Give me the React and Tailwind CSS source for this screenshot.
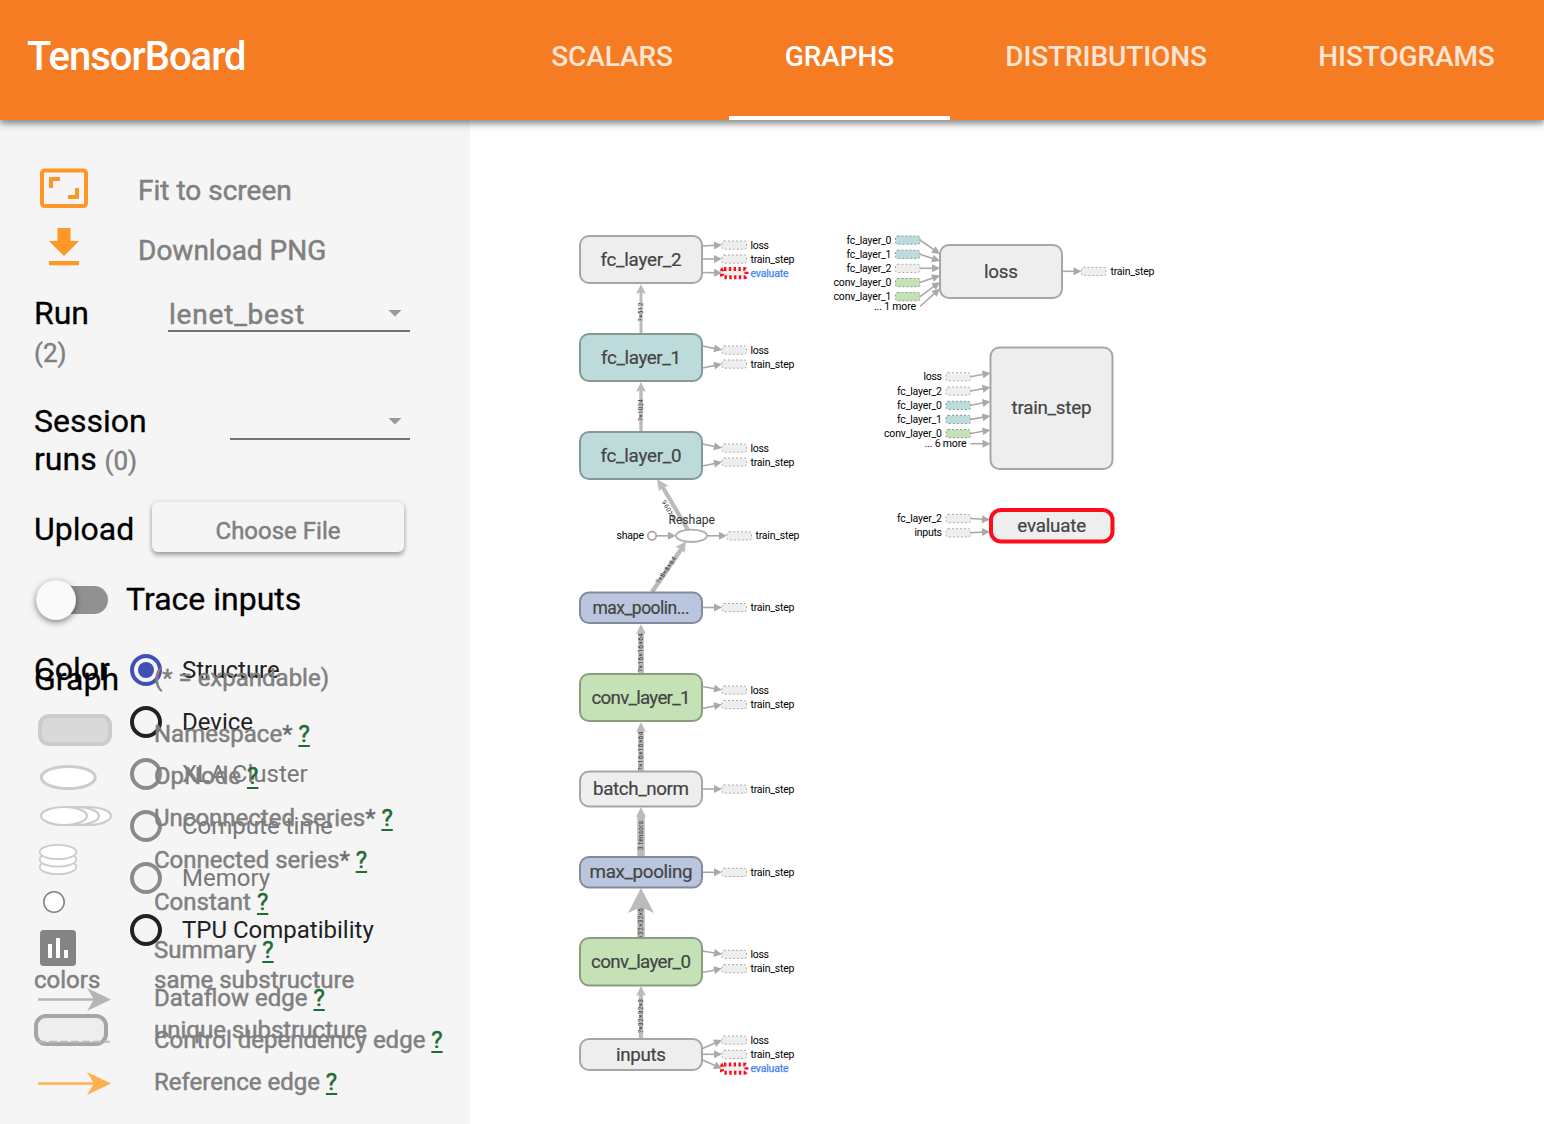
import React from "react";

const TABS = [
  { label: "SCALARS", tab: "w-[234px]", text: "tracking-[-0.1px] text-white/80" },
  { label: "GRAPHS", tab: "w-[221px]", text: "tracking-[-0.1px] text-white", active: true },
  { label: "DISTRIBUTIONS", tab: "w-[312px]", text: "tracking-[-0.1px] text-white/80" },
  { label: "HISTOGRAMS", tab: "w-[289px]", text: "tracking-[-0.1px] text-white/80" },
];

function Header() {
  return (
    <header className="relative z-10 flex h-[120px] shrink-0 bg-[#f57c22] shadow-[0_4px_4px_rgba(0,0,0,0.18),0_2px_10px_rgba(0,0,0,0.4)]">
      <div className="flex w-[495px] shrink-0 items-center pb-[6px] pl-[27px] text-[40px] font-medium tracking-[-1px] text-white">
        TensorBoard
      </div>
      <nav className="flex">
        {TABS.map((t) => (
          <div key={t.label} className={`flex shrink-0 flex-col ${t.tab}`}>
            <div className={`flex flex-1 items-center justify-center pb-[2px] text-[28px] font-medium ${t.text}`}>{t.label}</div>
            <div className={t.active ? "h-1 bg-white" : "h-1"} />
          </div>
        ))}
      </nav>
    </header>
  );
}

function Arrow() {
  return (
    <svg width="14" height="7" viewBox="0 0 14 7" className="shrink-0">
      <path d="M0.5 0H13.5L7 6.5Z" fill="#999" />
    </svg>
  );
}

function Controls() {
  return (
    <div className="flex flex-col">
      <div className="flex h-[60px] items-center">
        <svg className="ml-1 h-[52px] w-[52px] shrink-0" viewBox="38 164 52 52">
          <rect x="42" y="170.500" width="44" height="35.500" rx="2.500" fill="none" stroke="#ff9727" strokeWidth="4" />
          <path d="M51 188V179H60M77 188V197H68" fill="none" stroke="#ff9727" strokeWidth="4" />
        </svg>
        <span className="ml-12 pt-[2px] text-[28px] text-[#808080] [-webkit-text-stroke:0.5px_#808080]">Fit to screen</span>
      </div>
      <div className="flex h-[60px] items-center">
        <svg className="ml-1 h-[52px] w-[52px] shrink-0" viewBox="38 224 52 52">
          <path d="M57.500 228H70.500V241H79L64 256L49 241H57.500ZM49 261H79V265.200H49Z" fill="#ff9727" />
        </svg>
        <span className="ml-12 pt-[2px] text-[28px] text-[#808080] [-webkit-text-stroke:0.5px_#808080]">Download PNG</span>
      </div>

      <div className="mt-3 flex h-[100px] items-start">
        <div className="w-[134px] text-[32px] leading-[40px] text-black [-webkit-text-stroke:0.3px_#000]">
          <div className="pt-[1px]">Run</div>
          <div className="pt-[1px] text-[26px] leading-[38px] text-[#808080] [-webkit-text-stroke:0.4px_#808080]">(2)</div>
        </div>
        <div className="flex h-10 w-[242px] items-center justify-between border-b-2 border-[#737373] pr-2 pt-1 text-[28px] tracking-[0.8px] text-[#808080] [-webkit-text-stroke:0.5px_#808080]">
          <span className="pl-[1px] pt-[3px]">lenet_best</span>
          <Arrow />
        </div>
      </div>

      <div className="mt-2 flex h-[92px] items-start">
        <div className="w-[196px] text-[32px] leading-[38px] text-black [-webkit-text-stroke:0.3px_#000]">
          <div className="pt-[2px]">Session</div>
          <div>
            runs <span className="text-[26px] text-[#808080] [-webkit-text-stroke:0.4px_#808080]">(0)</span>
          </div>
        </div>
        <div className="flex h-10 w-[180px] items-center justify-end border-b-2 border-[#737373] pr-2 pt-1">
          <Arrow />
        </div>
      </div>

      <div className="mt-[10px] flex h-[50px] items-center">
        <div className="w-[118px] pt-[3px] text-[32px] text-black [-webkit-text-stroke:0.3px_#000]">Upload</div>
        <div className="flex h-[50px] w-[252px] items-center justify-center rounded-md bg-[#f5f5f5] pt-2 text-[24px] text-[#808080] shadow-[0_4px_4px_rgba(0,0,0,0.2),0_1px_5px_rgba(0,0,0,0.25)] [-webkit-text-stroke:0.5px_#808080]">
          Choose File
        </div>
      </div>

      <div className="mt-6 flex h-12 items-center">
        <div className="ml-[2px] flex h-7 w-[72px] items-center rounded-full bg-[#919191]">
          <div className="h-10 w-10 shrink-0 rounded-full bg-[#fafafa] shadow-[0_2px_6px_rgba(0,0,0,0.5)]" />
        </div>
        <div className="ml-[18px] pb-[3px] text-[32px] text-black [-webkit-text-stroke:0.3px_#000]">Trace inputs</div>
      </div>
    </div>
  );
}

const RADIOS = [
  { label: "Structure", ring: "border-[#3f51b5]", text: "text-[#212121]", on: true },
  { label: "Device", ring: "border-[#212121]", text: "text-[#212121]" },
  { label: "XLA Cluster", ring: "border-[#8b8b8b]", text: "text-[#777]" },
  { label: "Compute time", ring: "border-[#8b8b8b]", text: "text-[#777]" },
  { label: "Memory", ring: "border-[#8b8b8b]", text: "text-[#777]" },
  { label: "TPU Compatibility", ring: "border-[#212121]", text: "text-[#212121]" },
];

function ColorOptions() {
  return (
    <div className="col-start-1 row-start-1 flex flex-col">
      <div className="flex">
        <div className="h-[52px] w-24 text-[32px] leading-[50px] text-black [-webkit-text-stroke:0.3px_#000]">Color</div>
        <div className="flex flex-col">
          {RADIOS.map((r) => (
            <div key={r.label} className="flex h-[52px] items-center">
              <div className={`flex h-8 w-8 shrink-0 items-center justify-center rounded-full border-4 ${r.ring}`}>
                {r.on && <div className="h-4 w-4 rounded-full bg-[#3f51b5]" />}
              </div>
              <span className={`ml-5 whitespace-nowrap text-[24px] ${r.text}`}>{r.label}</span>
            </div>
          ))}
        </div>
      </div>
      <div className="flex h-12 items-center text-[24px] text-[#808080] [-webkit-text-stroke:0.5px_#808080]">
        <span className="w-[120px]">colors</span>
        <span>same substructure</span>
      </div>
      <div className="flex h-[52px] items-center text-[24px] text-[#808080] [-webkit-text-stroke:0.5px_#808080]">
        <div className="mr-[46px] h-8 w-[74px] rounded-xl border-4 border-[#a6a6a6] bg-[#eee]" />
        <span>unique substructure</span>
      </div>
    </div>
  );
}

function EdgeIcon({ color }) {
  return (
    <svg width="80" height="26" viewBox="34 0 80 26">
      <path d="M38 13.500H94" stroke={color} strokeWidth="2.500" />
      <path d="M87 2L111 13.500L87 25L94 13.500Z" fill={color} />
    </svg>
  );
}

const LEGEND = [
  {
    label: "Namespace", star: true, row: "h-[42px]",
    icon: (
      <svg width="80" height="42" viewBox="34 713 80 42">
        <rect x="40" y="716" width="70" height="28" rx="9" fill="#d9d9d9" stroke="#ccc" strokeWidth="4" />
      </svg>
    ),
  },
  {
    label: "OpNode", row: "h-[42px]",
    icon: (
      <svg width="80" height="42" viewBox="34 755 80 42">
        <ellipse cx="68.300" cy="777.500" rx="27" ry="11" fill="#fff" stroke="#ccc" strokeWidth="3" />
      </svg>
    ),
  },
  {
    label: "Unconnected series", star: true, row: "h-[42px]",
    icon: (
      <svg width="80" height="42" viewBox="34 797 80 42">
        {[88, 76, 64].map((x) => (
          <ellipse key={x} cx={x} cy="816" rx="23" ry="9" fill="#fff" stroke="#ccc" strokeWidth="2.200" />
        ))}
      </svg>
    ),
  },
  {
    label: "Connected series", star: true, row: "h-[42px]",
    icon: (
      <svg width="80" height="42" viewBox="34 839 80 42">
        {[867, 859.5, 852].map((y) => (
          <ellipse key={y} cx="58" cy={y} rx="18.300" ry="7.200" fill="#fff" stroke="#ccc" strokeWidth="1.800" />
        ))}
      </svg>
    ),
  },
  {
    label: "Constant", row: "h-[42px]",
    icon: (
      <svg width="80" height="42" viewBox="34 881 80 42">
        <circle cx="54" cy="902" r="10.200" fill="#fff" stroke="#848484" strokeWidth="1.600" />
      </svg>
    ),
  },
  {
    label: "Summary", row: "h-[54px]",
    icon: (
      <svg width="80" height="54" viewBox="34 923 80 54">
        <rect x="40" y="930" width="36" height="36" rx="3.500" fill="#848484" />
        <path d="M48 944H52V958H48ZM56 938H60V958H56ZM64 950H68V958H64Z" fill="#fff" />
      </svg>
    ),
  },
  { label: "Dataflow edge", row: "h-[42px]", icon: <div className="pt-[2px]"><EdgeIcon color="#b5b5b5" /></div> },
  {
    label: "Control dependency edge", row: "h-[42px]",
    icon: (
      <svg width="80" height="42" viewBox="34 1019 80 42">
        <path d="M38 1041.800H110" stroke="#bbb" strokeWidth="2" strokeDasharray="8 3" />
      </svg>
    ),
  },
  { label: "Reference edge", row: "h-[42px]", icon: <div className="pt-[2px]"><EdgeIcon color="#ffb14f" /></div> },
];

function Legend() {
  return (
    <div className="col-start-1 row-start-1 flex flex-col text-[#808080] [-webkit-text-stroke:0.5px_#808080]">
      <div className="flex h-[69px] items-center">
        <div className="w-[120px] text-[32px] text-black [-webkit-text-stroke:0.3px_#000]">Graph</div>
        <div className="pb-[1px] text-[24px]">(* = expandable)</div>
      </div>
      {LEGEND.map((l) => (
        <div key={l.label} className={`flex items-center ${l.row}`}>
          <div className="w-[120px] shrink-0">{l.icon}</div>
          <div className="whitespace-nowrap text-[24px]">
            {l.label}
            {l.star && <span className="text-[#666]">*</span>}{" "}
            <span className="text-[#1e6b34] underline decoration-2 underline-offset-[3px] [-webkit-text-stroke:0.5px_#1e6b34]">?</span>
          </div>
        </div>
      ))}
    </div>
  );
}

function Sidebar() {
  return (
    <aside className="flex w-[470px] shrink-0 flex-col overflow-hidden bg-[#f5f5f5] pl-[34px] pt-10">
      <Controls />
      <div className="mt-5 grid">
        <ColorOptions />
        <Legend />
      </div>
    </aside>
  );
}

const GREY = { fill: "#eee", stroke: "#a6a6a6" };
const TEAL = { fill: "#bddbdb", stroke: "#839a99" };
const BLUE = { fill: "#bac5de", stroke: "#828a9b" };
const GREEN = { fill: "#c5e1b6", stroke: "#8a9d7f" };
const RED = { fill: "#eee", stroke: "#fc0d1b", sw: 4, rx: 10 };

const NODES = [
  { t: "fc_layer_2", x: 580, y: 236, w: 122, h: 47, tl: 81, c: GREY },
  { t: "fc_layer_1", x: 580, y: 334, w: 122, h: 47, tl: 80, c: TEAL },
  { t: "fc_layer_0", x: 580, y: 432, w: 122, h: 47, tl: 81, c: TEAL },
  { t: "max_poolin...", x: 580, y: 592.5, w: 122, h: 30.5, tl: 97, c: BLUE, fs: 17.5 },
  { t: "conv_layer_1", x: 580, y: 674, w: 122, h: 47, tl: 99, c: GREEN },
  { t: "batch_norm", x: 580, y: 771.5, w: 122, h: 35, tl: 96, c: GREY },
  { t: "max_pooling", x: 580, y: 857, w: 122, h: 30.5, tl: 103, c: BLUE },
  { t: "conv_layer_0", x: 580, y: 938, w: 122, h: 47.5, tl: 100, c: GREEN },
  { t: "inputs", x: 580, y: 1039, w: 122, h: 31, tl: 50, c: GREY },
  { t: "loss", x: 940, y: 245, w: 122, h: 53, tl: 34, c: GREY },
  { t: "train_step", x: 990.5, y: 347.5, w: 122, h: 121.5, tl: 80, c: GREY },
  { t: "evaluate", x: 991, y: 510, w: 121.5, h: 31.5, tl: 69, c: RED },
];

const OUTS = [
  ["loss", 245, 246], ["train_step", 259, 259], ["evaluate", 273, 272.5],
  ["loss", 350, 346], ["train_step", 364, 368],
  ["loss", 448, 444], ["train_step", 462, 466],
  ["train_step", 607.5, 607.5],
  ["loss", 690, 686.5], ["train_step", 704.5, 708.5],
  ["train_step", 789, 789], ["train_step", 872.3, 872.3],
  ["loss", 954.3, 951], ["train_step", 968.6, 972.5],
  ["loss", 1040, 1048.5], ["train_step", 1054.3, 1054.3], ["evaluate", 1068.5, 1060],
];
const OUT_WIDTH = { loss: 18.5, train_step: 44, evaluate: 38 };

const INS = [
  ["fc_layer_0", 240, 895.5, TEAL, 45, 940, 254], ["fc_layer_1", 254.2, 895.5, TEAL, 45, 940, 261],
  ["fc_layer_2", 268.3, 895.5, GREY, 45, 940, 268.3], ["conv_layer_0", 282.5, 895.5, GREEN, 58, 940, 275.5],
  ["conv_layer_1", 296.6, 895.5, GREEN, 58, 940, 282], ["... 1 more", 306.5, 895.5, null, 42, 940, 288.5],
  ["loss", 376.7, 946, GREY, 18.5, 990.5, 373], ["fc_layer_2", 391, 946, GREY, 45, 990.5, 387.3],
  ["fc_layer_0", 405.3, 946, TEAL, 45, 990.5, 401.5], ["fc_layer_1", 419.4, 946, TEAL, 45, 990.5, 416],
  ["conv_layer_0", 433.5, 946, GREEN, 58, 990.5, 430], ["... 6 more", 443.7, 946, null, 42, 990.5, 443.7],
  ["fc_layer_2", 518.5, 946, GREY, 45, 990, 519.7], ["inputs", 532.7, 946, GREY, 27.5, 990, 531.7],
];

const FLOWS = [
  { w: 3, y1: 333, y2: 284, t: "?×512", ty: 312, tl: 19, s: 1 },
  { w: 3.4, y1: 431, y2: 382, t: "?×1024", ty: 410, tl: 22, s: 1 },
  { w: 5.6, y1: 673, y2: 624, t: "?×16×16×64", ty: 652.5, tl: 39, s: 1 },
  { w: 5.6, y1: 771, y2: 722, t: "?×16×16×64", ty: 751, tl: 39, s: 1 },
  { w: 7.5, y1: 856, y2: 807, t: "3 tensors", ty: 835.5, tl: 29, s: 1 },
  { w: 7.5, y1: 937, y2: 888, t: "?×32×32×6", ty: 925, tl: 34, s: 2.6 },
  { w: 4.2, y1: 1038, y2: 986, t: "?×32×32×3", ty: 1016, tl: 34, s: 1 },
];

function Pointer({ x1, y1, x2, y2 }) {
  const angle = (Math.atan2(y2 - y1, x2 - x1) * 180) / Math.PI;
  return (
    <g>
      <line x1={x1} y1={y1} x2={x2 - 3} y2={y2 - ((y2 - y1) * 3) / (x2 - x1)} stroke="#a9a9a9" strokeWidth="1.600" />
      <path d="M0 0L-8 -4V4Z" fill="#a9a9a9" transform={`translate(${x2} ${y2}) rotate(${angle})`} />
    </g>
  );
}

function Stub({ x, y, c, red }) {
  return (
    <rect x={x} y={y - 4} width="24.500" height="8.200" rx="2" fill={c.fill} stroke={red ? "#fc0d1b" : c === GREY ? "#adadad" : c.stroke} strokeWidth={red ? 4 : 1} strokeDasharray={red ? "2.4 2.4" : "2 2"} />
  );
}

function Graph() {
  return (
    <svg width="1074" height="1004" viewBox="470 120 1074 1004" className="block" fontFamily="Roboto, sans-serif">
      {FLOWS.map((f) => (
        <g key={f.y1}>
          <line x1="641" y1={f.y1} x2="641" y2={f.y2 + 7 * f.s} stroke="#bbb" strokeWidth={f.w} />
          <path
            d={f.s > 1 ? `M641 ${f.y2}L654 ${f.y2 + 25}L641 ${f.y2 + 19}L628 ${f.y2 + 25}Z` : `M641 ${f.y2}L646 ${f.y2 + 10}L641 ${f.y2 + 8}L636 ${f.y2 + 10}Z`}
            fill="#bbb"
          />
          <text transform={`translate(643.300 ${f.ty}) rotate(-90)`} textAnchor="middle" fontSize="6.500" textLength={f.tl} fill="#333">{f.t}</text>
        </g>
      ))}

      <line x1="652" y1="592" x2="682" y2="548" stroke="#bbb" strokeWidth="4.500" />
      <path d="M686 541.500L684.500 553L681 549L675.500 547Z" fill="#bbb" />
      <text transform="translate(667.800 571.300) rotate(-55.500)" textAnchor="middle" fontSize="6.500" textLength="31" fill="#333">?×8×8×64</text>
      <line x1="688" y1="530" x2="662" y2="486" stroke="#bbb" strokeWidth="4.200" />
      <path d="M657 479L668.500 486L662.500 487L659 491.500Z" fill="#bbb" />
      <text transform="translate(671.500 510) rotate(-120)" textAnchor="middle" fontSize="6.500" textLength="24" fill="#333">?×4096</text>

      <Pointer x1={656} y1={535.8} x2={676} y2={535.8} />
      <circle cx="652" cy="535.800" r="4.200" fill="#fff" stroke="#a9a9a9" strokeWidth="1.800" />
      <ellipse cx="691.500" cy="535.800" rx="15.500" ry="6.200" fill="#fff" stroke="#b0b0b0" strokeWidth="1.800" />
      <Pointer x1={707} y1={535.8} x2={727} y2={535.8} />
      <Stub x={727} y={535.8} c={GREY} />
      <text x="755.500" y="539.300" fontSize="10.500" textLength="44">train_step</text>
      <text x="616.500" y="539.300" fontSize="10.500" textLength="27.500">shape</text>
      <text x="668.500" y="524.200" fontSize="12.200" textLength="46.500" fill="#333">Reshape</text>

      {OUTS.map(([t, y, y1]) => (
        <g key={`${t}${y}`}>
          <Stub x={722} y={y} c={GREY} red={t === "evaluate"} />
          <Pointer x1={702.5} y1={y1} x2={722} y2={y} />
          <text x="750.500" y={y + 3.8} fontSize="10.500" textLength={OUT_WIDTH[t]} fill={t === "evaluate" ? "#4285f4" : "#000"} stroke={t === "evaluate" ? "#4285f4" : "none"} strokeWidth="0.250">{t}</text>
        </g>
      ))}
      {INS.map(([t, y, sx, c, tl, x2, y2]) => (
        <g key={`${t}${y}`}>
          {c && <Stub x={sx} y={y} c={c} />}
          <Pointer x1={sx + 24.5} y1={y} x2={x2} y2={y2} />
          <text x={c ? sx - 4 : sx + 20.5} y={y + 3.5} textAnchor="end" fontSize="10.500" textLength={tl}>{t}</text>
        </g>
      ))}
      <Stub x={1081.5} y={271.3} c={GREY} />
      <Pointer x1={1062} y1={271.3} x2={1081.5} y2={271.3} />
      <text x="1110.500" y="275.100" fontSize="10.500" textLength="44">train_step</text>

      {NODES.map((n) => (
        <g key={n.t}>
          <rect x={n.x} y={n.y} width={n.w} height={n.h} rx={n.c.rx || 9} fill={n.c.fill} stroke={n.c.stroke} strokeWidth={n.c.sw || 2} />
          <text x={n.x + n.w / 2} y={n.y + n.h / 2 + 6.1} textAnchor="middle" fontSize={n.fs || 18.8} textLength={n.tl} fill="#444" stroke="#444" strokeWidth="0.200">{n.t}</text>
        </g>
      ))}
    </svg>
  );
}

export default function App() {
  return (
    <div className="flex h-[1124px] w-[1544px] flex-col overflow-hidden bg-white font-['Roboto',sans-serif]">
      <Header />
      <div className="flex min-h-0 flex-1">
        <Sidebar />
        <main className="flex-1 bg-white">
          <Graph />
        </main>
      </div>
    </div>
  );
}
